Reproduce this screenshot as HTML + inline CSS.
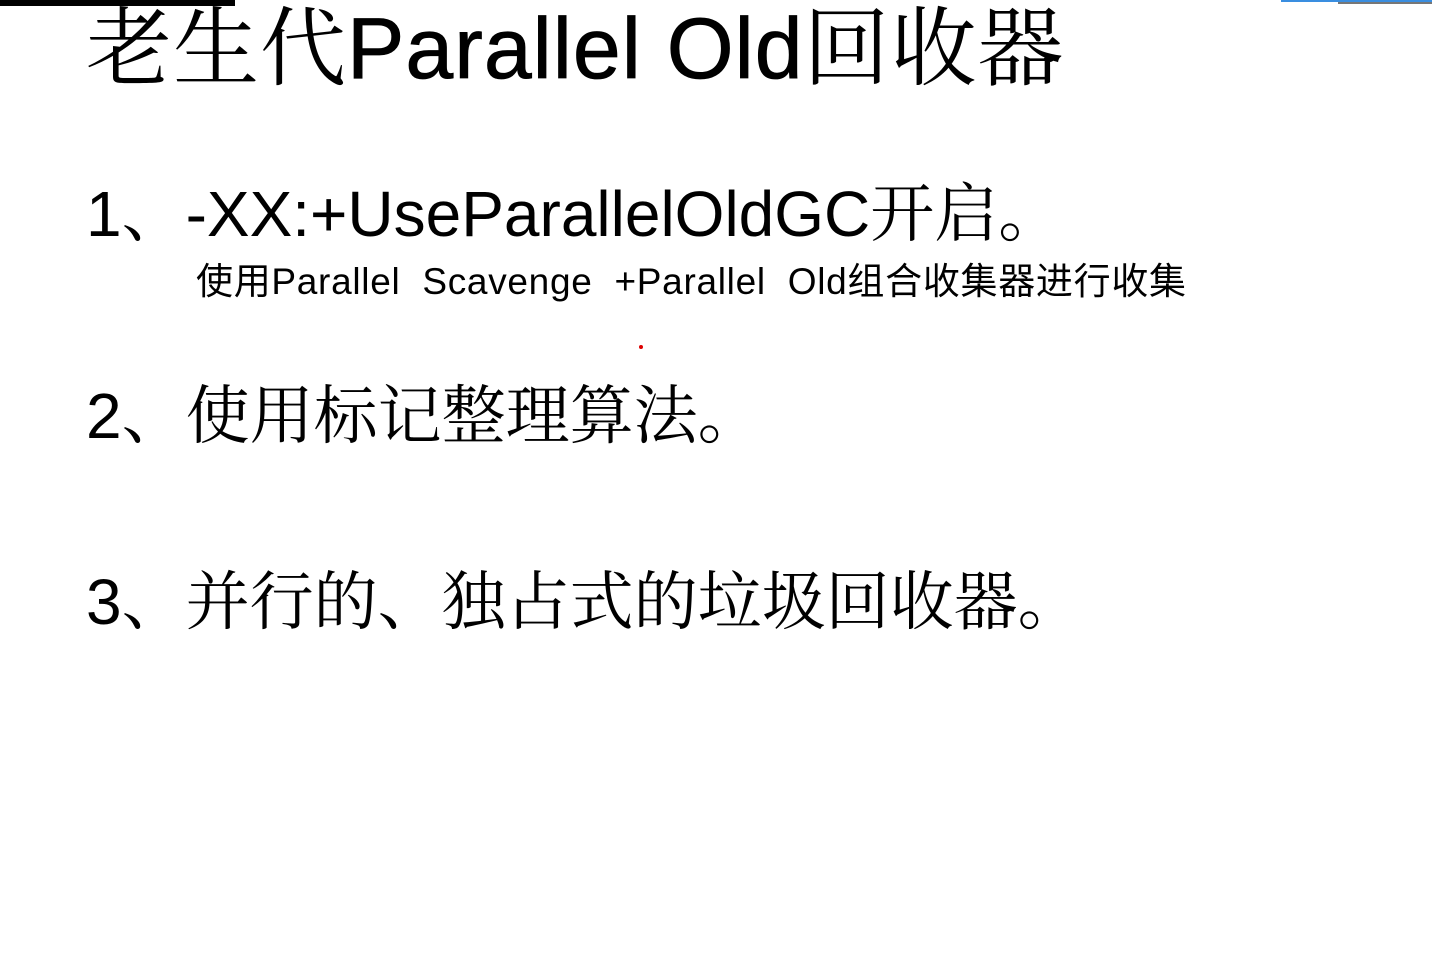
<!DOCTYPE html>
<html><head><meta charset="utf-8"><style>
body{margin:0;width:1432px;height:980px;background:#fff;position:relative;overflow:hidden;font-family:"Liberation Sans","Noto Serif CJK SC",serif;color:#000}
.t{position:absolute;white-space:nowrap;line-height:1}
.b{-webkit-text-stroke:0.8px #000}
</style></head><body>
<div style="position:absolute;left:0;top:0;width:235px;height:6px;background:#000"></div>
<div style="position:absolute;left:1281px;top:0;width:151px;height:2px;background:#3a8ee0"></div>
<div style="position:absolute;left:1338px;top:2px;width:94px;height:2px;background:#777"></div>
<div class="t" style="left:86px;top:6px;font-size:86px;letter-spacing:1px">老生代<span class="b">Parallel Old</span>回收器</div>
<div class="t" style="left:86px;top:182px;font-size:64px;letter-spacing:0px">1、-XX:+UseParallelOldGC开启。</div>
<div class="t" style="left:196px;top:263px;font-size:37px;letter-spacing:0.7px;font-family:'Liberation Sans','Noto Sans CJK SC',sans-serif">使用Parallel&nbsp; Scavenge&nbsp; +Parallel&nbsp; Old组合收集器进行收集</div>
<div style="position:absolute;left:639px;top:345px;width:4px;height:4px;border-radius:2px;background:#d00"></div>
<div class="t" style="left:86px;top:384px;font-size:64px">2、使用标记整理算法。</div>
<div class="t" style="left:86px;top:570px;font-size:64px">3、并行的、独占式的垃圾回收器。</div>
</body></html>
